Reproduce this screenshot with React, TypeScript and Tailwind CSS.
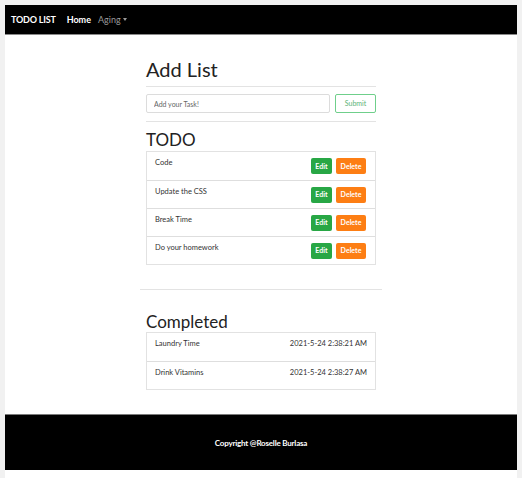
import React from "react";

const todos = ["Code", "Update the CSS", "Break Time", "Do your homework"];
const done = [
  { t: "Laundry Time", d: "2021-5-24 2:38:21 AM" },
  { t: "Drink Vitamins", d: "2021-5-24 2:38:27 AM" },
];

export default function App() {
  return (
    <div className="min-h-[478px] bg-[#f1f1f1] pl-[5px] pr-[5px] pt-[5px]" style={{ fontFamily: "Lato, 'Open Sans', sans-serif" }}>
      <div className="bg-white h-[473px] flex flex-col">
        <nav className="h-[30px] bg-black border-b border-[#8a8a8a] flex items-center pl-[6px] gap-[7px] text-[9px]">
          <span className="text-white font-bold tracking-[-0.2px]">TODO LIST</span>
          <span className="text-white font-bold ml-[4px]">Home</span>
          <span className="text-[#9a9a9a] flex items-center gap-[2px]">
            Aging
            <span className="inline-block w-0 h-0 border-l-[2.5px] border-r-[2.5px] border-t-[3px] border-l-transparent border-r-transparent border-t-[#9a9a9a]" />
          </span>
        </nav>

        <main className="flex-1 flex flex-col items-center">
          <div className="w-[230px] pt-[22px]">
            <h1 className="text-[20px] leading-[24px] text-[#222] font-normal">Add List</h1>
            <div className="mt-[5px] border-t border-[#e3e3e3]" />
            <div className="mt-[7px] flex gap-[5px]">
              <input
                placeholder="Add your Task!"
                className="w-[184px] h-[19px] border border-[#dcdcdc] rounded-[2px] px-[7px] text-[7px] text-[#555] placeholder:text-[#666] outline-none"
              />
              <button className="w-[41px] h-[19px] border border-[#6fcf8b] rounded-[2px] text-[7px] text-[#5cb377]">Submit</button>
            </div>
            <div className="mt-[8px] border-t border-[#e3e3e3]" />
            <h2 className="mt-[8px] text-[17px] leading-[20px] text-[#222]">TODO</h2>
            <ul className="mt-[1px] border border-[#e2e2e2]">
              {todos.map((t, i) => (
                <li key={t} className={`h-[28px] flex justify-between pl-[8px] pr-[9px] ${i > 0 ? "border-t border-[#dedede]" : ""}`}>
                  <span className="text-[7.5px] leading-[9px] pt-[6px] text-[#333]">{t}</span>
                  <div className="flex items-center gap-[4px]">
                    <button className="w-[21px] h-[16px] bg-[#28a745] rounded-[2px] text-white text-[7px] font-bold">Edit</button>
                    <button className="w-[30px] h-[16px] bg-[#fd7e14] rounded-[2px] text-white text-[7px] font-bold">Delete</button>
                  </div>
                </li>
              ))}
            </ul>
          </div>
          <div className="w-[242px] mt-[24px] border-t border-[#e3e3e3]" />
          <div className="w-[230px] mt-[22px]">
            <h2 className="text-[17px] leading-[20px] text-[#222]">Completed</h2>
            <ul className="border border-[#e2e2e2]">
              {done.map((x, i) => (
                <li key={x.t} className={`h-[28px] flex justify-between pl-[8px] pr-[8px] pt-[6px] ${i > 0 ? "border-t border-[#dedede]" : ""}`}>
                  <span className="text-[7.5px] leading-[9px] text-[#333]">{x.t}</span>
                  <span className="text-[7.5px] leading-[9px] text-[#333]">{x.d}</span>
                </li>
              ))}
            </ul>
          </div>
        </main>

        <footer className="h-[56px] mb-[8px] bg-black border-t border-[#7a7a7a] flex items-center justify-center">
          <span className="text-white text-[8px] font-bold tracking-[-0.2px]">Copyright @Roselle Burlasa</span>
        </footer>
      </div>
    </div>
  );
}
